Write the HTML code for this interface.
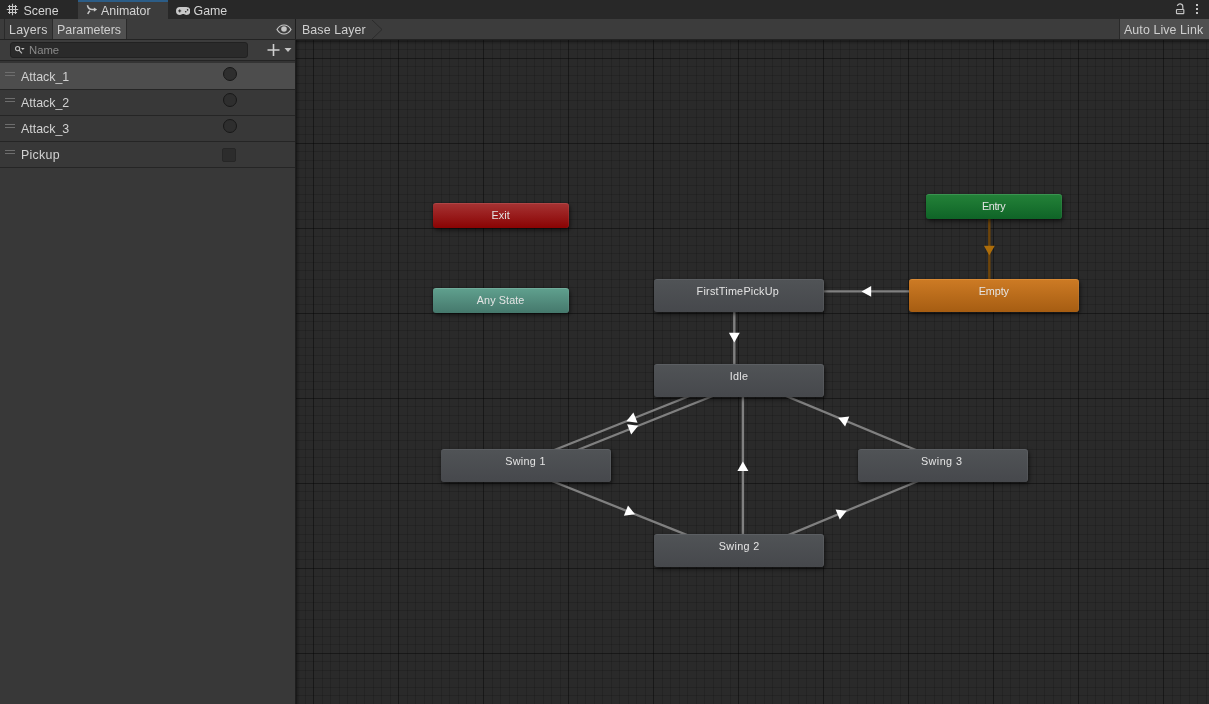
<!DOCTYPE html>
<html><head><meta charset="utf-8">
<style>
html,body{margin:0;padding:0;}
body{width:1209px;height:704px;overflow:hidden;background:#383838;font-family:"Liberation Sans",sans-serif;font-size:12.4px;color:#d2d2d2;position:relative;}
.abs{position:absolute;}
#tabbar{left:0;top:0;width:1209px;height:19px;background:#282828;}
.tab{position:absolute;top:0;height:19px;line-height:21px;white-space:nowrap;color:#d4d4d4;}
#tab-anim{left:78px;width:90px;background:#3c3c3c;border-top:2px solid #2c5d87;height:17px;}
#toolbar{left:0;top:19px;width:1209px;background:#3c3c3c;border-bottom:1px solid #232323;box-sizing:border-box;height:21px;}
.tbtn{position:absolute;top:19px;height:20px;line-height:22px;white-space:nowrap;color:#cfcfcf;}
.sep{position:absolute;top:19px;height:20px;width:1px;background:#2a2a2a;}
#left{left:0;top:40px;width:295px;height:664px;background:#383838;}
#searchrow{left:0;top:40px;width:295px;height:20px;background:#3c3c3c;border-bottom:1px solid #242424;}
#search{left:10px;top:42px;width:238px;height:16px;box-sizing:border-box;background:#2a2a2a;border:1px solid #212121;border-radius:3px;}
.row{position:absolute;left:0;width:295px;height:25px;border-bottom:1px solid #252525;}
.row .lbl{position:absolute;left:21px;top:1px;line-height:27px;color:#d2d2d2;white-space:nowrap;}
.row .h{position:absolute;left:5px;width:10px;height:1px;background:#6e6e6e;}
.circ{position:absolute;left:223px;width:12px;height:12px;border-radius:50%;background:#2e2e2e;border:1px solid #181818;box-sizing:content-box;}
#divider{left:295px;top:40px;width:1px;height:664px;background:#1e1e1e;}
#graph{left:296px;top:40px;width:913px;height:664px;overflow:hidden;background:#2a2a2a;}
.node{position:absolute;box-sizing:border-box;border-radius:3px;text-align:center;color:#e4e4e4;font-size:10.8px;white-space:nowrap;box-shadow:inset -1px 0 0 rgba(255,255,255,0.06),1px 2px 4px rgba(0,0,0,0.6);}
.gray{background:linear-gradient(#505356,#46484c);border-top:1px solid #5b5e62;line-height:23px;}
.orange{background:linear-gradient(#cc7a24,#a65d12);border-top:1px solid #d98a35;line-height:23px;}
.red{background:linear-gradient(#a53232,#8a0303);border-top:1px solid #b04545;line-height:22px;}
.teal{background:linear-gradient(#5f9f8d,#45786c);border-top:1px solid #72ad9c;line-height:22px;}
.green{background:linear-gradient(#238138,#0f6427);border-top:1px solid #3a9350;line-height:22px;}
#wrap{position:absolute;left:0;top:0;width:1209px;height:704px;will-change:transform;}
</style></head><body><div id="wrap">
<div id="tabbar" class="abs"></div>
<div class="tab" style="left:0;width:78px;"><svg class="abs" style="left:6px;top:3px" width="13" height="13" viewBox="6 3 13 13"><path d="M9.5 5v9M12.5 3.800v11.400M15.500 5v9M8 6.500h9M6.800 9.500h11.400M8 12.500h9" stroke="#c8c8c8" stroke-width="1.100" fill="none"/></svg><span class="abs" style="left:23.500px;top:1px">Scene</span></div>
<div class="tab" id="tab-anim"><svg class="abs" style="left:8px;top:2px" width="12" height="12" viewBox="86 4 12 12"><path d="M87.400 5.200C88 7.600 89.600 9.500 92.200 9.500H95M87.800 13.900C88.200 12.700 88.900 11.700 90 10.900" stroke="#c8c8c8" stroke-width="1.500" fill="none"/><path d="M93.900 7.400L97.100 9.500L93.900 11.700z" fill="#c8c8c8"/></svg><span class="abs" style="left:23px;top:-1px">Animator</span></div>
<div class="tab" style="left:168px;width:70px;"><svg class="abs" style="left:7.800px;top:6.500px" width="14.400" height="8" viewBox="0 0 14.400 8"><path d="M4 0h6.400a4 4 0 0 1 0 8c-1.200 0-1.800-.9-2.600-.9h-1.200c-.8 0-1.400.9-2.600.9a4 4 0 0 1 0-8z" fill="#c8c8c8"/><circle cx="11.600" cy="2.900" r="0.800" fill="#282828"/><circle cx="9.700" cy="4.800" r="0.800" fill="#282828"/><path d="M2.200 3.900h3M3.700 2.400v3" stroke="#282828" stroke-width="1"/></svg><span class="abs" style="left:25.500px;top:1px">Game</span></div>
<svg class="abs" style="left:1172px;top:2px" width="30" height="14" viewBox="1172 2 30 14"><path d="M1177.300 5.900A2.800 2.800 0 0 1 1182.800 6.700V9" stroke="#c4c4c4" stroke-width="1.200" fill="none"/><rect x="1176.500" y="9.500" width="7.300" height="4.200" rx="0.600" fill="none" stroke="#c4c4c4" stroke-width="1.200"/><path d="M1178 11.600h4.400" stroke="#5a5a5a" stroke-width="1"/><rect x="1196" y="4" width="2" height="2" fill="#c4c4c4"/><rect x="1196" y="8" width="2" height="2" fill="#c4c4c4"/><rect x="1196" y="12" width="2" height="2" fill="#c4c4c4"/></svg>

<div id="toolbar" class="abs"></div>
<div class="sep" style="left:4px"></div>
<div class="tbtn" style="left:5px;width:47px;background:#3c3c3c;"><span class="abs" style="left:4px;letter-spacing:0.25px">Layers</span></div>
<div class="sep" style="left:52px"></div>
<div class="tbtn" style="left:53px;width:73px;background:#505050;"><span class="abs" style="left:4px">Parameters</span></div>
<div class="sep" style="left:126px"></div>
<svg class="abs" style="left:276px;top:24px" width="16" height="11" viewBox="0 0 16 11"><path d="M1 5.5C3 2 5.5 1 8 1s5 1 7 4.5C13 9 10.500 10 8 10S3 9 1 5.500z" fill="none" stroke="#c4c4c4" stroke-width="1.2"/><circle cx="8" cy="5" r="2.8" fill="#c4c4c4"/></svg>
<div class="sep" style="left:295px;width:1px;background:#1e1e1e"></div>
<div class="tbtn" style="left:296px;width:80px;"><span class="abs" style="left:6px;letter-spacing:0.1px">Base Layer</span></div>
<svg class="abs" style="left:370px;top:20px" width="14" height="19" viewBox="0 0 14 19"><path d="M2 0l10 9.500L2 19" fill="none" stroke="#2c2c2c" stroke-width="1"/></svg>
<div class="sep" style="left:1119px"></div>
<div class="tbtn" style="left:1120px;width:89px;background:#505050;"><span class="abs" style="left:4px;letter-spacing:0.1px">Auto Live Link</span></div>

<div id="left" class="abs"></div>
<div id="searchrow" class="abs"></div>
<div class="abs" style="left:0;top:61px;width:295px;height:2px;background:#343434"></div>
<div id="search" class="abs"><svg class="abs" style="left:3px;top:2px" width="12" height="10" viewBox="0 0 12 10"><circle cx="3.600" cy="3.600" r="2.100" fill="none" stroke="#bdbdbd" stroke-width="1.100"/><path d="M5.100 5.100l2.800 3.300" stroke="#bdbdbd" stroke-width="1.200"/><path d="M7 3h3.600L8.800 5z" fill="#c4c4c4"/></svg><span class="abs" style="left:18px;top:0;line-height:14px;font-size:11.300px;color:#8a8a8a">Name</span></div>
<svg class="abs" style="left:265.500px;top:43px" width="28" height="14" viewBox="0 0 28 14"><path d="M1.500 7h12M7.500 1v12" stroke="#d0d0d0" stroke-width="1.600"/><path d="M18.500 5h7l-3.500 4z" fill="#c4c4c4"/></svg>

<div class="row" style="top:63px;background:#4d4d4d;height:26px"><div class="h" style="top:9px"></div><div class="h" style="top:12px"></div><span class="lbl">Attack_1</span><div class="circ" style="top:4px"></div></div>
<div class="row" style="top:90px;"><div class="h" style="top:8px"></div><div class="h" style="top:11px"></div><span class="lbl" style="top:0">Attack_2</span><div class="circ" style="top:3px"></div></div>
<div class="row" style="top:116px;"><div class="h" style="top:8px"></div><div class="h" style="top:11px"></div><span class="lbl" style="top:0">Attack_3</span><div class="circ" style="top:3px"></div></div>
<div class="row" style="top:142px;"><div class="h" style="top:8px"></div><div class="h" style="top:11px"></div><span class="lbl" style="top:0;letter-spacing:0.3px">Pickup</span><div class="abs" style="left:222px;top:6px;width:12px;height:12px;background:#2c2c2c;border:1px solid #262626;border-radius:2px"></div></div>

<div id="divider" class="abs"></div>
<div id="graph" class="abs">
<svg class="abs" style="left:0;top:0" width="913" height="664" viewBox="296 40 913 664">
<defs>
<linearGradient id="vl" x1="0" x2="1" y1="0" y2="0"><stop offset="0" stop-color="#000" stop-opacity="0.350"/><stop offset="1" stop-color="#000" stop-opacity="0"/></linearGradient>
<linearGradient id="vt" x1="0" x2="0" y1="0" y2="1"><stop offset="0" stop-color="#000" stop-opacity="0.350"/><stop offset="1" stop-color="#000" stop-opacity="0"/></linearGradient>
</defs>
<g id="grid">
<path d="M296.5 40V704M305.5 40V704M322.5 40V704M330.5 40V704M339.5 40V704M347.5 40V704M356.5 40V704M364.5 40V704M373.5 40V704M381.5 40V704M390.5 40V704M407.5 40V704M415.5 40V704M424.5 40V704M432.5 40V704M441.5 40V704M449.5 40V704M458.5 40V704M466.5 40V704M475.5 40V704M492.5 40V704M500.5 40V704M509.5 40V704M517.5 40V704M526.5 40V704M534.5 40V704M543.5 40V704M551.5 40V704M560.5 40V704M577.5 40V704M585.5 40V704M594.5 40V704M602.5 40V704M611.5 40V704M619.5 40V704M628.5 40V704M636.5 40V704M645.5 40V704M662.5 40V704M670.5 40V704M679.5 40V704M687.5 40V704M696.5 40V704M704.5 40V704M713.5 40V704M721.5 40V704M730.5 40V704M747.5 40V704M755.5 40V704M764.5 40V704M772.5 40V704M781.5 40V704M789.5 40V704M798.5 40V704M806.5 40V704M815.5 40V704M832.5 40V704M840.5 40V704M849.5 40V704M857.5 40V704M866.5 40V704M874.5 40V704M883.5 40V704M891.5 40V704M900.5 40V704M917.5 40V704M925.5 40V704M934.5 40V704M942.5 40V704M951.5 40V704M959.5 40V704M968.5 40V704M976.5 40V704M985.5 40V704M1002.5 40V704M1010.5 40V704M1019.5 40V704M1027.5 40V704M1036.5 40V704M1044.5 40V704M1053.5 40V704M1061.5 40V704M1070.5 40V704M1087.5 40V704M1095.5 40V704M1104.5 40V704M1112.5 40V704M1121.5 40V704M1129.5 40V704M1138.5 40V704M1146.5 40V704M1155.5 40V704M1172.5 40V704M1180.5 40V704M1189.5 40V704M1197.5 40V704M1206.5 40V704M313.5 40V704M398.5 40V704M483.5 40V704M568.5 40V704M653.5 40V704M738.5 40V704M823.5 40V704M908.5 40V704M993.5 40V704M1078.5 40V704M1163.5 40V704" stroke="#000" stroke-opacity="0.12" stroke-width="1" fill="none" shape-rendering="crispEdges"/>
<path d="M296 41.5H1209M296 49.5H1209M296 66.5H1209M296 75.5H1209M296 83.5H1209M296 92.5H1209M296 100.5H1209M296 109.5H1209M296 117.5H1209M296 126.5H1209M296 134.5H1209M296 151.5H1209M296 160.5H1209M296 168.5H1209M296 177.5H1209M296 185.5H1209M296 194.5H1209M296 202.5H1209M296 211.5H1209M296 219.5H1209M296 236.5H1209M296 245.5H1209M296 253.5H1209M296 262.5H1209M296 270.5H1209M296 279.5H1209M296 287.5H1209M296 296.5H1209M296 304.5H1209M296 321.5H1209M296 330.5H1209M296 338.5H1209M296 347.5H1209M296 355.5H1209M296 364.5H1209M296 372.5H1209M296 381.5H1209M296 389.5H1209M296 406.5H1209M296 415.5H1209M296 423.5H1209M296 432.5H1209M296 440.5H1209M296 449.5H1209M296 457.5H1209M296 466.5H1209M296 474.5H1209M296 491.5H1209M296 500.5H1209M296 508.5H1209M296 517.5H1209M296 525.5H1209M296 534.5H1209M296 542.5H1209M296 551.5H1209M296 559.5H1209M296 576.5H1209M296 585.5H1209M296 593.5H1209M296 602.5H1209M296 610.5H1209M296 619.5H1209M296 627.5H1209M296 636.5H1209M296 644.5H1209M296 661.5H1209M296 670.5H1209M296 678.5H1209M296 687.5H1209M296 695.5H1209M296 58.5H1209M296 143.5H1209M296 228.5H1209M296 313.5H1209M296 398.5H1209M296 483.5H1209M296 568.5H1209M296 653.5H1209" stroke="#000" stroke-opacity="0.12" stroke-width="1" fill="none" shape-rendering="crispEdges"/>
<path d="M313.5 40V704M398.5 40V704M483.5 40V704M568.5 40V704M653.5 40V704M738.5 40V704M823.5 40V704M908.5 40V704M993.5 40V704M1078.5 40V704M1163.5 40V704" stroke="#000" stroke-opacity="0.32" stroke-width="1" fill="none" shape-rendering="crispEdges"/>
<path d="M296 58.5H1209M296 143.5H1209M296 228.5H1209M296 313.5H1209M296 398.5H1209M296 483.5H1209M296 568.5H1209M296 653.5H1209" stroke="#000" stroke-opacity="0.32" stroke-width="1" fill="none" shape-rendering="crispEdges"/>
</g>
<rect x="296" y="40" width="4" height="664" fill="url(#vl)"/>
<rect x="296" y="40" width="913" height="5" fill="url(#vt)"/>
<g id="edges">
<line x1="989.3" y1="207.0" x2="989.3" y2="295.7" stroke="#6e4409" stroke-width="2.4"/>
<polygon points="989.3,255.3 983.9,245.7 994.8,245.7" fill="#ad6d0a"/>
<line x1="993.6" y1="291.4" x2="738.6" y2="291.4" stroke="#808080" stroke-width="2.4"/>
<polygon points="861.5,291.4 871.2,285.9 871.2,296.8" fill="#ffffff"/>
<line x1="734.3" y1="295.7" x2="734.3" y2="381.0" stroke="#808080" stroke-width="2.4"/>
<polygon points="734.3,342.4 728.9,332.7 739.8,332.7" fill="#ffffff"/>
<line x1="737.0" y1="377.0" x2="524.4" y2="462.0" stroke="#808080" stroke-width="2.4"/>
<polygon points="626.4,421.2 633.4,412.6 637.5,422.7" fill="#ffffff"/>
<line x1="527.6" y1="470.0" x2="740.2" y2="385.0" stroke="#808080" stroke-width="2.4"/>
<polygon points="638.2,425.8 631.2,434.4 627.1,424.3" fill="#ffffff"/>
<line x1="524.4" y1="470.0" x2="737.0" y2="555.0" stroke="#808080" stroke-width="2.4"/>
<polygon points="635.0,514.2 623.9,515.7 628.0,505.5" fill="#ffffff"/>
<line x1="742.9" y1="551.0" x2="742.9" y2="381.0" stroke="#808080" stroke-width="2.4"/>
<polygon points="742.9,461.4 748.4,471.1 737.4,471.1" fill="#ffffff"/>
<line x1="740.3" y1="555.0" x2="944.7" y2="470.0" stroke="#808080" stroke-width="2.4"/>
<polygon points="846.7,510.7 839.8,519.5 835.6,509.4" fill="#ffffff"/>
<line x1="944.7" y1="462.0" x2="740.3" y2="377.0" stroke="#808080" stroke-width="2.4"/>
<polygon points="838.2,417.8 849.3,416.5 845.1,426.5" fill="#ffffff"/>
</g>
</svg>
</div>
<div id="nodes">
<div class="node red" style="left:433px;top:203px;width:136px;height:25px;"><span style="letter-spacing:0.10px;position:relative;left:-0.4px">Exit</span></div>
<div class="node teal" style="left:433px;top:288px;width:136px;height:25px;"><span style="letter-spacing:0.10px;position:relative;left:-0.4px">Any State</span></div>
<div class="node green" style="left:926px;top:194px;width:136px;height:25px;"><span style="letter-spacing:-0.35px;position:relative;left:-0.4px">Entry</span></div>
<div class="node orange" style="left:909px;top:279px;width:170px;height:33px;"><span style="letter-spacing:-0.10px;position:relative;left:-0.2px">Empty</span></div>
<div class="node gray" style="left:654px;top:279px;width:170px;height:33px;"><span style="letter-spacing:0.25px;position:relative;left:-1.2px">FirstTimePickUp</span></div>
<div class="node gray" style="left:654px;top:364px;width:170px;height:33px;"><span style="letter-spacing:0.28px;position:relative;left:0.0px">Idle</span></div>
<div class="node gray" style="left:441px;top:449px;width:170px;height:33px;"><span style="letter-spacing:0.30px;position:relative;left:-0.5px">Swing 1</span></div>
<div class="node gray" style="left:654px;top:534px;width:170px;height:33px;"><span style="letter-spacing:0.38px;position:relative;left:0.2px">Swing 2</span></div>
<div class="node gray" style="left:858px;top:449px;width:170px;height:33px;"><span style="letter-spacing:0.45px;position:relative;left:-1.3px">Swing 3</span></div>
</div>
</div></body></html>
